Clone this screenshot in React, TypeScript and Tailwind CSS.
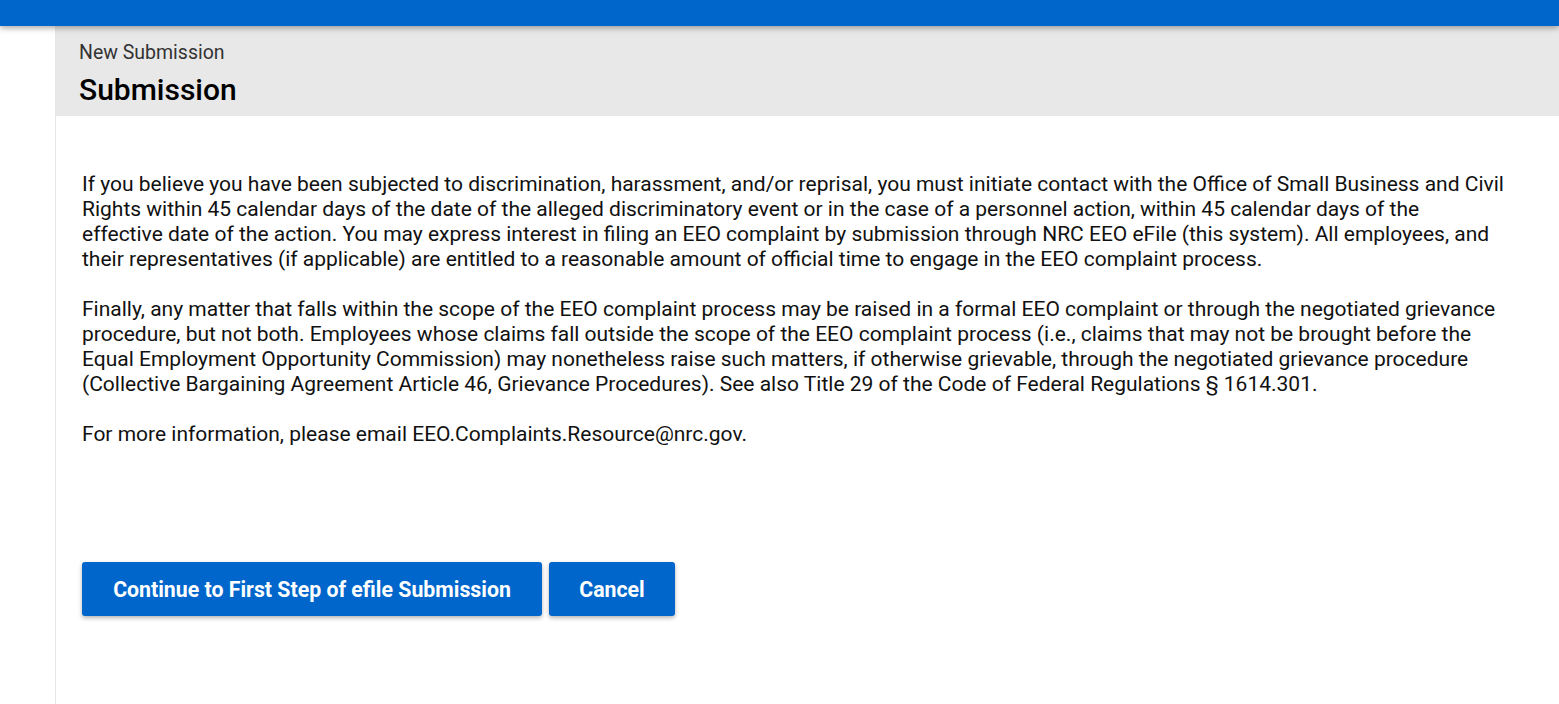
import React from 'react';

const App: React.FC = () => {
  return (
    <div className="min-h-screen bg-white font-['Roboto',sans-serif] text-black">
      <div className="relative z-10 h-[26px] bg-[#0066cc] shadow-[0_2px_6px_rgba(0,0,0,0.35)]" />
      <div className="flex">
        <div className="w-[55px] shrink-0" />
        <main className="flex-1 min-h-[678px] border-l border-[#e6e6e6]">
          <header className="h-[90px] bg-[#e8e8e8] pl-[23px] pt-[15px]">
            <div className="text-[19.5px] leading-[24px] text-[#333]">New Submission</div>
            <h1 className="mt-[9px] text-[30px] leading-[32px] font-medium">Submission</h1>
          </header>
          <section className="pl-[26px] pt-[56px] text-[21px] leading-[25px] text-[#111]">
            <p>
              If you believe you have been subjected to discrimination, harassment, and/or reprisal, you must initiate contact with the Office of Small Business and Civil
              <br />
              Rights within 45 calendar days of the date of the alleged discriminatory event or in the case of a personnel action, within 45 calendar days of the
              <br />
              effective date of the action. You may express interest in filing an EEO complaint by submission through NRC EEO eFile (this system). All employees, and
              <br />
              their representatives (if applicable) are entitled to a reasonable amount of official time to engage in the EEO complaint process.
            </p>
            <p className="mt-[25px]">
              Finally, any matter that falls within the scope of the EEO complaint process may be raised in a formal EEO complaint or through the negotiated grievance
              <br />
              procedure, but not both. Employees whose claims fall outside the scope of the EEO complaint process (i.e., claims that may not be brought before the
              <br />
              Equal Employment Opportunity Commission) may nonetheless raise such matters, if otherwise grievable, through the negotiated grievance procedure
              <br />
              (Collective Bargaining Agreement Article 46, Grievance Procedures). See also Title 29 of the Code of Federal Regulations § 1614.301.
            </p>
            <p className="mt-[25px]">For more information, please email EEO.Complaints.Resource@nrc.gov.</p>
            <div className="mt-[115px] flex gap-[7px]">
              <button className="h-[54px] w-[460px] rounded-[3px] bg-[#0066cc] text-[21.3px] font-bold text-white shadow-[0_2px_4px_rgba(0,0,0,0.3)]">
                Continue to First Step of efile Submission
              </button>
              <button className="h-[54px] w-[126px] rounded-[3px] bg-[#0066cc] text-[21.3px] font-bold text-white shadow-[0_2px_4px_rgba(0,0,0,0.3)]">
                Cancel
              </button>
            </div>
          </section>
        </main>
      </div>
    </div>
  );
};

export default App;
